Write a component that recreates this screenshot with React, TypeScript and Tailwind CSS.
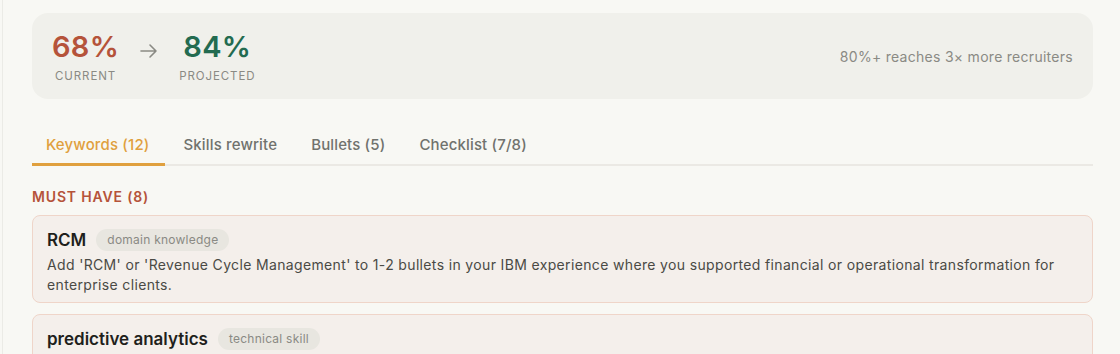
import React from "react";

export default function App() {
  return (
    <div className="w-[1120px] h-[354px] overflow-hidden bg-[#f8f8f4]" style={{ fontFamily: "Inter, 'Noto Sans', sans-serif" }}>
      <div className="ml-[2px] h-full border-l border-[#ebebe6] pl-[29px] pr-[27px] pt-[13px]">
        <div className="flex h-[86px] items-center justify-between rounded-[16px] bg-[#f0f0eb] pl-[20px] pr-[20px]">
          <div className="flex items-center gap-[20px]">
            <div className="flex flex-col items-center">
              <span className="text-[29px] font-semibold leading-[34px] tracking-[0.01em] text-[#b5533a]">68%</span>
              <span className="mt-[5px] text-[11.5px] leading-[14px] tracking-[0.08em] text-[#8a8a84]">CURRENT</span>
            </div>
            <svg className="mb-[10px]" width="20" height="16" viewBox="0 0 20 16" fill="none" stroke="#8a8a84" strokeWidth="1.6" strokeLinecap="round" strokeLinejoin="round">
              <path d="M2 8h15M11 2l6 6-6 6" />
            </svg>
            <div className="flex flex-col items-center">
              <span className="text-[29px] font-semibold leading-[34px] tracking-[0.01em] text-[#236b50]">84%</span>
              <span className="mt-[5px] text-[11.5px] leading-[14px] tracking-[0.08em] text-[#8a8a84]">PROJECTED</span>
            </div>
          </div>
          <span className="text-[14px] tracking-[0.02em] text-[#8a8a84]">80%+ reaches 3× more recruiters</span>
        </div>

        <div className="mt-[36px] flex gap-[4px] border-b-2 border-[#ebe9e4]">
          <div className="-mb-[2px] border-b-[3px] border-[#e0a03e] pl-[14px] pr-[16px] pb-[8px] text-[15px] font-medium leading-[20px] tracking-[0.01em] text-[#e0a03e]">Keywords (12)</div>
          <div className="pl-[14px] pr-[16px] pb-[8px] text-[15px] font-medium leading-[20px] tracking-[0.01em] text-[#70726d]">Skills rewrite</div>
          <div className="pl-[14px] pr-[16px] pb-[8px] text-[15px] font-medium leading-[20px] tracking-[0.01em] text-[#70726d]">Bullets (5)</div>
          <div className="pl-[14px] pr-[16px] pb-[8px] text-[15px] font-medium leading-[20px] tracking-[0.01em] text-[#70726d]">Checklist (7/8)</div>
        </div>

        <div className="mt-[21px] text-[14px] font-semibold leading-[20px] tracking-[0.06em] text-[#b5533a]">MUST HAVE (8)</div>

        <div className="mt-[8px] flex flex-col gap-[11px]">
          <div className="rounded-[8px] border border-[#efd5c9] bg-[#f4efeb] px-[14px] pt-[11px] pb-[7px]">
            <div className="flex items-center gap-[10px]">
              <span className="text-[17px] font-semibold leading-[26px] text-[#1f1f1c]">RCM</span>
              <span className="rounded-full bg-[#e8e6e0] px-[11px] py-[3px] text-[12px] leading-[16px] tracking-[0.02em] text-[#8a8a84]">domain knowledge</span>
            </div>
            <p className="mt-[2px] text-[14px] leading-[20px] tracking-[0.025em] text-[#4a4a45]">
              Add 'RCM' or 'Revenue Cycle Management' to 1-2 bullets in your IBM experience where you supported financial or operational transformation for enterprise clients.
            </p>
          </div>
          <div className="h-[90px] rounded-[8px] border border-[#efd5c9] bg-[#f4efeb] px-[14px] pt-[11px]">
            <div className="flex items-center gap-[10px]">
              <span className="text-[17px] font-semibold leading-[26px] text-[#1f1f1c]">predictive analytics</span>
              <span className="rounded-full bg-[#e8e6e0] px-[11px] py-[3px] text-[12px] leading-[16px] tracking-[0.02em] text-[#8a8a84]">technical skill</span>
            </div>
          </div>
        </div>
      </div>
    </div>
  );
}
